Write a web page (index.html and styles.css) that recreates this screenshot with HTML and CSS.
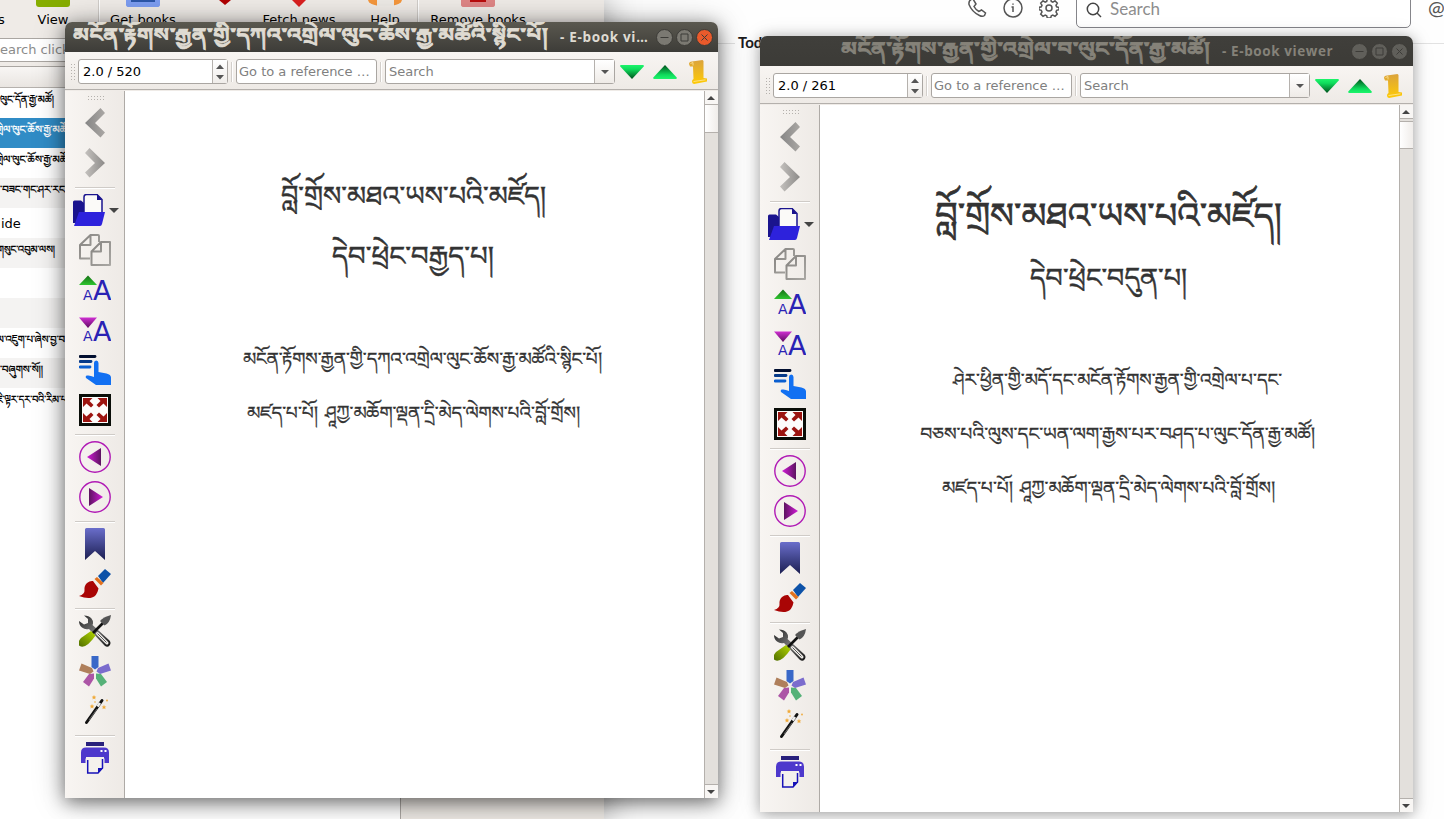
FILE: index.html
```
<!DOCTYPE html>
<html lang="en">
<head>
<meta charset="utf-8">
<title>E-book viewer</title>
<link rel="stylesheet" href="styles.css">
</head>
<body>
<svg class="defs" aria-hidden="true">
  <defs>
    <linearGradient id="gDown" x1="0" y1="0" x2="0" y2="1"><stop offset="0" stop-color="#1cf56b"/><stop offset=".3" stop-color="#0fdc5c"/><stop offset="1" stop-color="#00501c"/></linearGradient>
    <linearGradient id="gUp" x1="0" y1="1" x2="0" y2="0"><stop offset="0" stop-color="#1cf56b"/><stop offset=".3" stop-color="#0fdc5c"/><stop offset="1" stop-color="#00501c"/></linearGradient>
    <linearGradient id="gScroll" x1="0" y1="0" x2="0" y2="1"><stop offset="0" stop-color="#dba33c"/><stop offset="1" stop-color="#ffcb05"/></linearGradient>
    <linearGradient id="gGrey" x1="0" y1="0" x2="1" y2="1"><stop offset="0" stop-color="#858380"/><stop offset="1" stop-color="#a9a7a3"/></linearGradient>
    <linearGradient id="gGrey2" x1="0" y1="0" x2="1" y2="0"><stop offset="0" stop-color="#c4c1be"/><stop offset="1" stop-color="#8c8a88"/></linearGradient>
    <linearGradient id="gChev" x1="0" y1="0" x2="1" y2="0"><stop offset="0" stop-color="#858585"/><stop offset="1" stop-color="#aaa7a4"/></linearGradient>
    <linearGradient id="gGreen" x1="0" y1="0" x2="0" y2="1"><stop offset="0" stop-color="#156f15"/><stop offset="1" stop-color="#2fc52f"/></linearGradient>
    <linearGradient id="gPurple" x1="0" y1="0" x2="0" y2="1"><stop offset="0" stop-color="#cf2fd2"/><stop offset="1" stop-color="#5d0a60"/></linearGradient>
    <linearGradient id="gPl" x1="0" y1="0" x2="1" y2="0"><stop offset="0" stop-color="#d31bd8"/><stop offset="1" stop-color="#5c1460"/></linearGradient>
    <linearGradient id="gPr" x1="0" y1="0" x2="1" y2="0"><stop offset="0" stop-color="#5c1460"/><stop offset="1" stop-color="#d31bd8"/></linearGradient>
    <linearGradient id="gMark" x1="0" y1="0" x2="0" y2="1"><stop offset="0" stop-color="#6a6ecb"/><stop offset="1" stop-color="#1c1f52"/></linearGradient>
    <linearGradient id="gTool" x1="0" y1="0" x2="1" y2="1"><stop offset="0" stop-color="#222"/><stop offset=".5" stop-color="#777"/><stop offset="1" stop-color="#111"/></linearGradient>
    <linearGradient id="gHandle" x1="1" y1="0" x2="0" y2="1"><stop offset="0" stop-color="#b5d900"/><stop offset="1" stop-color="#4d6b00"/></linearGradient>

    <symbol id="i-back" viewBox="0 0 32 32"><path d="M21.500 1 26 6 16 16l10 9.500-4.500 5L6 16z" fill="url(#gChev)"/></symbol>
    <symbol id="i-fwd" viewBox="0 0 32 32"><path d="M10.500 1 6 6l10 10L6 25.500l4.500 5L26 16z" fill="url(#gGrey2)"/></symbol>
    <symbol id="i-open" viewBox="0 0 32 32"><path d="M0 8q0-1.500 1.500-1.500H8L11 9v9L3 29H0z" fill="#1a148e"/><path d="M11 20V3q0-2.500 2.500-2.500H24l5 5V20z" fill="#fbfaf8" stroke="#1a148e" stroke-width="1.500"/><path d="M24 0v6h5z" fill="#1a148e"/><path d="M6 18h26l-3 12q-.5 2-2 2H1z" fill="#2d22dc"/></symbol>
    <symbol id="i-copy" viewBox="0 0 32 32"><g fill="none" stroke="url(#gGrey)" stroke-width="2" stroke-linejoin="round"><path d="M11 24.500H1V11L11.500 1H19q1 0 1 1v6M11.500 1v10H1"/><path d="M12.500 17.500 22 8h9v23H12.500zM22 8v9.500h-9.500"/></g></symbol>
    <symbol id="i-larger" viewBox="0 0 32 32"><path d="M0 11 9 1.500l9 9.500z" fill="url(#gGreen)"/><text x="4" y="26" class="glyph-s">A</text><text x="14" y="26" class="glyph-l">A</text></symbol>
    <symbol id="i-smaller" viewBox="0 0 32 32"><path d="M0 3.500h18l-9 10.500z" fill="url(#gPurple)"/><text x="4" y="27" class="glyph-s">A</text><text x="14" y="27" class="glyph-l">A</text></symbol>
    <symbol id="i-touch" viewBox="0 0 32 32"><path d="M1 2.500h15" stroke="#020f30" stroke-width="2.800" stroke-linecap="round"/><path d="M1 7.500h11" stroke="#063a8a" stroke-width="2.800" stroke-linecap="round"/><path d="M1 13h10" stroke="#0b5fd0" stroke-width="2.800" stroke-linecap="round"/><path d="M15 21V9q0-2.500 2.200-2.500T19.500 9v9l8 1.500q4.500 1 4.500 4V31H17L7 24q-1-2 1-2.500 3-.5 7 1.500z" fill="#1270f2"/></symbol>
    <symbol id="i-full" viewBox="0 0 32 32"><path d="M1.500 1.500h29v29h-29z" fill="#fdfcfb" stroke="#0a0d08" stroke-width="3"/><g fill="#9c1410"><path d="M4 4h9.500l-3 3 4 4-2.500 2.500-4.500-4L4 13z"/><path d="M28 4h-9.500l3 3-4 4 2.500 2.500 4.500-4L28 13z"/><path d="M4 28h9.500l-3-3 4-4-2.500-2.500-4.500 4L4 19z"/><path d="M28 28h-9.500l3-3-4-4 2.500-2.500 4.500 4L28 19z"/></g></symbol>
    <symbol id="i-prev" viewBox="0 0 32 32"><circle cx="16" cy="16" r="15.200" fill="none" stroke="#b01ab5" stroke-width="1.400"/><path d="M8 16 22 7v18z" fill="url(#gPl)"/></symbol>
    <symbol id="i-next" viewBox="0 0 32 32"><circle cx="16" cy="16" r="15.200" fill="none" stroke="#b01ab5" stroke-width="1.400"/><path d="M24 16 10 7v18z" fill="url(#gPr)"/></symbol>
    <symbol id="i-mark" viewBox="0 0 32 32"><path d="M6 1.500Q6 0 7.500 0h17Q26 0 26 1.500V32l-10-9-10 9z" fill="url(#gMark)"/></symbol>
    <symbol id="i-brush" viewBox="0 0 32 32"><path d="m19 8 7-7 6 5-8 9z" fill="#0d52a8"/><path d="m15.500 11 2.500-2 6.500 6-2.500 2.500z" fill="#e2711d"/><path d="M14 13q-3-.5-6 2-3 3-2.500 7T0 28q8 3 13 1.500t6.500-9z" fill="#a90505"/></symbol>
    <symbol id="i-tools" viewBox="0 0 32 32"><path d="M5 .5q5 0 7.500 3Q15 7 13.500 10l17 15.500q2 2.500 0 5t-5 0L10 14q-4 1-7-1.500T0 6l5 3.500 4-1.500V4z" fill="url(#gTool)"/><path d="m18.500 18.500 9.500 9.500" stroke="#f1eeea" stroke-width="3" stroke-linecap="round"/><path d="m18.500 18.500 9 9" stroke="#555" stroke-width="1"/><path d="m12 20 13-13" stroke="#111" stroke-width="2.600"/><path d="M32 0q-8 2-11 6l4.500 4.500Q31 8 32 0z" fill="#555"/><path d="m12 16 4.500 4.500Q8 33 2 31.500T2 23z" fill="url(#gHandle)"/></symbol>
    <symbol id="i-tags" viewBox="0 0 32 32"><path d="M12.500 1h7v11L16 14.500 12.500 12z" fill="#3968c8"/><path d="m19 13 10.500-4.500L32 15.500l-11 3.500-3.500-2.500z" fill="#7b6ccd"/><path d="m17 18.500 5 .5 6 8-6 4.500-5-8z" fill="#55b178"/><path d="m15 18.500-5 .5-6 8 6 4.500 5-8z" fill="#ac55a6"/><path d="M13 13 2.500 8.500 0 15.500 11 19l3.500-2.500z" fill="#af7f5b"/></symbol>
    <symbol id="i-wand" viewBox="0 0 32 32"><path d="m7.500 27.500 15.500-22" stroke="#111" stroke-width="3" stroke-linecap="round"/><path d="m18.500 11.500 2.500-3.500" stroke="#eee" stroke-width="2.600"/><path d="m10 25 8-11" stroke="#888" stroke-width=".7"/><g fill="#f0aa3a"><path id="star" d="m15 0 .7 1.600 1.600.1-1.200 1.100.4 1.600L15 3.500l-1.500.9.4-1.600-1.200-1.100 1.600-.1z"/><path d="m13 9 .7 1.600 1.600.1-1.200 1.100.4 1.600-1.500-.9-1.500.9.4-1.600-1.200-1.100 1.600-.1z"/><path d="m25 9.800.7 1.600 1.600.1-1.200 1.100.4 1.600-1.500-.9-1.500.9.4-1.600-1.200-1.100 1.600-.1z"/><circle cx="28" cy="5.500" r=".9"/><circle cx="16" cy="7" r=".8"/></g></symbol>
    <symbol id="i-print" viewBox="0 0 32 32"><path d="M7 0h18v4H7z" fill="#28207c"/><path d="M7 5.500h18q5 0 5 5V21h-5v-7H7v7H2V10.500q0-5 5-5z" fill="#4d38cc"/><path d="M7 11h18v4H7z" fill="#4d38cc"/><path d="M21.500 8h2v2h-2zM25.500 8h2v2h-2z" fill="#fff"/><path d="M6.500 16.500h19V23H24v8H8v-8H6.500z" fill="#f4f1ed"/><path d="M8.700 18v13H19l4.500-5V17" fill="none" stroke="#1712b8" stroke-width="1.500"/><path d="M19 31v-5h5z" fill="#1712b8"/></symbol>
    <symbol id="i-down" viewBox="0 0 24 14"><path d="M1 0h22q1.500.5.5 1.800L12 14 .5 1.800Q-.5.500 1 0z" fill="url(#gDown)"/></symbol>
    <symbol id="i-up" viewBox="0 0 24 14"><path d="M1 14h22q1.500-.5.5-1.800L12 0 .5 12.200q-1 1.300.5 1.800z" fill="url(#gUp)"/></symbol>
    <symbol id="i-scroll" viewBox="0 0 18 24"><path d="M0 4Q0 1.800 3 1.500L13.500 0q1.500.5 1 3L14.500 18l3.500.5v3L5 24q-2-.5-2-2.500T4.500 19L4 6.500 1 6.500z" fill="url(#gScroll)"/><path d="M1.500 3.500 4 2.500v3M4.500 21.500l12-1.700" fill="none" stroke="#ffe9a0" stroke-width=".8"/></symbol>
    <symbol id="i-spin" viewBox="0 0 8 18"><path d="M0 6 4 1.500 8 6zM0 12h8l-4 4.500z" fill="#555"/></symbol>
  </defs>
</svg>

<div class="desktop">
  <section class="library">
    <div class="lib-toolbar">
      <div class="lib-item item-view"><i class="pic pic-view"></i><span>View</span></div>
      <b class="lib-sep"></b>
      <div class="lib-item item-get"><i class="pic pic-get"></i><span>Get books</span></div>
      <div class="lib-item item-heart"><i class="pic pic-heart"></i></div>
      <div class="lib-item item-news"><i class="pic pic-news"></i><span>Fetch news</span></div>
      <div class="lib-item item-help"><i class="pic pic-help"></i><span>Help</span></div>
      <b class="lib-sep"></b>
      <div class="lib-item item-remove"><i class="pic pic-remove"></i><span>Remove books</span></div>
      <span class="lib-cut">s</span>
    </div>
    <div class="lib-search">earch click</div>
    <div class="lib-main">
      <div class="lib-list">
        <div class="lib-head"></div>
        <div class="row"><svg class="bo"><text x="0" y="15" textLength="54" lengthAdjust="spacingAndGlyphs">ལུང་དོན་རྒྱ་མཚོ།</text></svg></div>
        <div class="row selected"><svg class="bo"><text x="-4" y="15" textLength="71" lengthAdjust="spacingAndGlyphs">གྲེལ་ལུང་ཆོས་རྒྱ་མཚོ</text></svg></div>
        <div class="row"><svg class="bo"><text x="-4" y="15" textLength="71" lengthAdjust="spacingAndGlyphs">གྲེལ་ལུང་ཆོས་རྒྱ་མཚོ</text></svg></div>
        <div class="row"><svg class="bo"><text x="0" y="15" textLength="67" lengthAdjust="spacingAndGlyphs">་བཟང་གང་ཤར་རང་</text></svg></div>
        <div class="row">ide</div>
        <div class="row"><svg class="bo"><text x="-3" y="15" textLength="58" lengthAdjust="spacingAndGlyphs">གསུང་འབུམ་ལས།</text></svg></div>
        <div class="row"></div>
        <div class="row"></div>
        <div class="row"><svg class="bo"><text x="-3" y="15" textLength="68" lengthAdjust="spacingAndGlyphs">ལ་འཇུག་པ་ཞེས་བྱ་བ</text></svg></div>
        <div class="row"><svg class="bo"><text x="0" y="15" textLength="43" lengthAdjust="spacingAndGlyphs">་བཞུགས་སོ།།</text></svg></div>
        <div class="row"><svg class="bo"><text x="-3" y="15" textLength="70" lengthAdjust="spacingAndGlyphs">ཇི་ལྟར་དར་བའི་རིམ་པ</text></svg></div>
      </div>
      <div class="lib-side"></div>
    </div>
  </section>

  <section class="chat">
    <header class="chat-head">
      <svg class="ci" viewBox="0 0 20 20"><path d="M4 1.500 6 1l3 5-2 2.500q1.500 3 5 5L14.500 12l4 3-1 2.500q-2 1.500-5 0Q5 14 2 6.500 1.500 3 4 1.500z"/></svg>
      <svg class="ci" viewBox="0 0 20 20"><circle cx="10" cy="10" r="9"/><path d="M8.500 9H10v5M10 5.500v1.300"/></svg>
      <svg class="ci" viewBox="0 0 20 20"><circle cx="10" cy="10" r="3"/><path d="M8.300 1h3.400l.6 2.400 1.500.7 2.200-1.300 2.300 2.300-1.300 2.200.6 1.500 2.400.6v2.200l-2.400.8-.6 1.500 1.300 2.200-2.300 2.200-2.200-1.200-1.500.6-.6 2.300H8.300l-.6-2.300-1.500-.6L4 18.300l-2.300-2.200L3 13.900l-.7-1.500L0 11.600V9.400l2.300-.6L3 7.300 1.700 5.100 4 2.800l2.200 1.300 1.500-.7z"/></svg>
      <div class="chat-search"><svg class="mag" viewBox="0 0 16 16"><circle cx="7" cy="7" r="5.700"/><path d="m11 11 4 4"/></svg><span>Search</span></div>
      <span class="at">@</span>
    </header>
    <div class="today">Today</div>
  </section>

  <section class="window win-a">
    <header class="titlebar">
      <svg class="bo title-bo"><text x="0" y="19" textLength="475" lengthAdjust="spacingAndGlyphs">མངོན་རྟོགས་རྒྱན་གྱི་དཀའ་འགྲེལ་ལུང་ཆོས་རྒྱ་མཚོའི་སྙིང་པོ།</text></svg>
      <span class="title-en">- E-book vi…</span>
      <svg class="wb" viewBox="0 0 17 17"><circle cx="8.500" cy="8.500" r="8"/><path d="M4.500 8.500h8"/></svg>
      <svg class="wb" viewBox="0 0 17 17"><circle cx="8.500" cy="8.500" r="8"/><path d="M5 5h7v7H5z"/></svg>
      <svg class="wb close" viewBox="0 0 17 17"><circle cx="8.500" cy="8.500" r="8"/><path d="m5.500 5.500 6 6m0-6-6 6"/></svg>
    </header>
    <div class="toolbar">
      <i class="grip-v"></i>
      <div class="spin"><span>2.0 / 520</span><b><svg><use href="#i-spin"/></svg></b></div>
      <i class="tsep"></i><div class="field goto">Go to a reference …</div>
      <i class="tsep"></i><div class="field find"><span>Search</span><b></b></div>
      <svg class="tri"><use href="#i-down"/></svg><svg class="tri"><use href="#i-up"/></svg><svg class="scroll"><use href="#i-scroll"/></svg>
    </div>
    <div class="body">
      <nav class="side">
        <i class="grip-h"></i>
        <svg><use href="#i-back"/></svg><svg><use href="#i-fwd"/></svg><hr>
        <div class="open"><svg><use href="#i-open"/></svg><i></i></div><svg><use href="#i-copy"/></svg><svg><use href="#i-larger"/></svg><svg><use href="#i-smaller"/></svg><svg><use href="#i-touch"/></svg><svg><use href="#i-full"/></svg><hr>
        <svg><use href="#i-prev"/></svg><svg><use href="#i-next"/></svg><hr>
        <svg><use href="#i-mark"/></svg><svg><use href="#i-brush"/></svg><hr>
        <svg><use href="#i-tools"/></svg><svg><use href="#i-tags"/></svg><svg><use href="#i-wand"/></svg><hr>
        <svg><use href="#i-print"/></svg>
      </nav>
      <main class="page page-a">
        <svg class="bo h1"><text x="156" y="30" textLength="265" lengthAdjust="spacingAndGlyphs">བློ་གྲོས་མཐའ་ཡས་པའི་མཛོད།</text></svg>
        <svg class="bo h1"><text x="207" y="30" textLength="162" lengthAdjust="spacingAndGlyphs">དེབ་ཕྲེང་བརྒྱད་པ།</text></svg>
        <svg class="bo p first"><text x="118" y="26" textLength="359" lengthAdjust="spacingAndGlyphs">མངོན་རྟོགས་རྒྱན་གྱི་དཀའ་འགྲེལ་ལུང་ཆོས་རྒྱ་མཚོའི་སྙིང་པོ།</text></svg>
        <svg class="bo p"><text x="122" y="26" textLength="71" lengthAdjust="spacingAndGlyphs">མཛད་པ་པོ།</text><text x="200" y="26" textLength="255" lengthAdjust="spacingAndGlyphs">ཤཱཀྱ་མཆོག་ལྡན་དྲི་མེད་ལེགས་པའི་བློ་གྲོས།</text></svg>
      </main>
      <div class="sb"><b class="up"></b><i></i><b class="down"></b></div>
    </div>
  </section>

  <section class="window win-b">
    <header class="titlebar">
      <svg class="bo title-bo"><text x="0" y="19" textLength="369" lengthAdjust="spacingAndGlyphs">མངོན་རྟོགས་རྒྱན་གྱི་འགྲེལ་བ་ལུང་དོན་རྒྱ་མཚོ།</text></svg>
      <span class="title-en">- E-book viewer</span>
      <svg class="wb" viewBox="0 0 17 17"><circle cx="8.500" cy="8.500" r="8"/><path d="M4.500 8.500h8"/></svg>
      <svg class="wb" viewBox="0 0 17 17"><circle cx="8.500" cy="8.500" r="8"/><path d="M5 5h7v7H5z"/></svg>
      <svg class="wb" viewBox="0 0 17 17"><circle cx="8.500" cy="8.500" r="8"/><path d="m5.500 5.500 6 6m0-6-6 6"/></svg>
    </header>
    <div class="toolbar">
      <i class="grip-v"></i>
      <div class="spin"><span>2.0 / 261</span><b><svg><use href="#i-spin"/></svg></b></div>
      <i class="tsep"></i><div class="field goto">Go to a reference …</div>
      <i class="tsep"></i><div class="field find"><span>Search</span><b></b></div>
      <svg class="tri"><use href="#i-down"/></svg><svg class="tri"><use href="#i-up"/></svg><svg class="scroll"><use href="#i-scroll"/></svg>
    </div>
    <div class="body">
      <nav class="side">
        <i class="grip-h"></i>
        <svg><use href="#i-back"/></svg><svg><use href="#i-fwd"/></svg><hr>
        <div class="open"><svg><use href="#i-open"/></svg><i></i></div><svg><use href="#i-copy"/></svg><svg><use href="#i-larger"/></svg><svg><use href="#i-smaller"/></svg><svg><use href="#i-touch"/></svg><svg><use href="#i-full"/></svg><hr>
        <svg><use href="#i-prev"/></svg><svg><use href="#i-next"/></svg><hr>
        <svg><use href="#i-mark"/></svg><svg><use href="#i-brush"/></svg><hr>
        <svg><use href="#i-tools"/></svg><svg><use href="#i-tags"/></svg><svg><use href="#i-wand"/></svg><hr>
        <svg><use href="#i-print"/></svg>
      </nav>
      <main class="page page-b">
        <svg class="bo h1 big"><text x="115" y="33" textLength="347" lengthAdjust="spacingAndGlyphs">བློ་གྲོས་མཐའ་ཡས་པའི་མཛོད།</text></svg>
        <svg class="bo h1"><text x="210" y="30" textLength="157" lengthAdjust="spacingAndGlyphs">དེབ་ཕྲེང་བདུན་པ།</text></svg>
        <svg class="bo p first"><text x="133" y="25" textLength="329" lengthAdjust="spacingAndGlyphs">ཤེར་ཕྱིན་གྱི་མདོ་དང་མངོན་རྟོགས་རྒྱན་གྱི་འགྲེལ་པ་དང་</text></svg>
        <svg class="bo p"><text x="100" y="25" textLength="395" lengthAdjust="spacingAndGlyphs">བཅས་པའི་ལུས་དང་ཡན་ལག་རྒྱས་པར་བཤད་པ་ལུང་དོན་རྒྱ་མཚོ།</text></svg>
        <svg class="bo p"><text x="122" y="25" textLength="71" lengthAdjust="spacingAndGlyphs">མཛད་པ་པོ།</text><text x="200" y="25" textLength="255" lengthAdjust="spacingAndGlyphs">ཤཱཀྱ་མཆོག་ལྡན་དྲི་མེད་ལེགས་པའི་བློ་གྲོས།</text></svg>
      </main>
      <div class="sb"><b class="up"></b><i></i><b class="down"></b></div>
    </div>
  </section>
</div>
</body>
</html>
```
FILE: styles.css
```
* { box-sizing: border-box; }
body { margin: 0; font: 13px "DejaVu Sans", sans-serif; color: #000; overflow: hidden; }
.defs { position: absolute; width: 0; height: 0; }
.bo { display: block; overflow: visible; font-family: "Noto Serif Tibetan", "Noto Sans Tibetan", "Jomolhari", "DejaVu Sans", serif; fill: currentColor; stroke: currentColor; stroke-width: .3px; }

.desktop { position: relative; width: 1444px; height: 819px; display: flex; background: #fefefe; overflow: hidden; }

/* library window behind the viewers */
.library { width: 604px; flex: none; display: flex; flex-direction: column; background: #efebe7; box-shadow: 0 0 34px rgba(0,0,0,.4); z-index: 1; }
.lib-toolbar { position: relative; height: 38px; flex: none; display: flex; overflow: hidden; }
.lib-item { display: flex; flex-direction: column; align-items: center; height: 29px; white-space: nowrap; flex: none; }
.lib-item span { line-height: 16px; margin-top: 5px; }
.lib-cut { position: absolute; left: -2px; top: 12px; line-height: 16px; }
.item-view { width: 32px; margin-left: 37px; }
.item-get { width: 66px; margin-left: 10px; }
.item-heart { width: 30px; margin-left: 34px; }
.item-news { width: 74px; margin-left: 22px; }
.item-help { width: 30px; margin-left: 34px; }
.item-remove { width: 96px; margin-left: 11px; }
.lib-sep { width: 2px; flex: none; background: #fff; border-left: 1px solid #d0ccc8; height: 36px; margin-left: 29px; }
.item-help + .lib-sep { margin-left: 17px; }
.pic { width: 34px; height: 7px; flex: none; }
.pic-view { background: #86ad00; border-radius: 0 0 3px 3px; }
.pic-get { background: #2c56a8; border: 5px solid #7d9df0; border-top: 0; border-radius: 0 0 3px 3px; }
.pic-heart { width: 12px; height: 5px; background: #b00000; clip-path: polygon(0 0, 100% 0, 50% 100%); }
.pic-news { width: 14px; background: #d92020; clip-path: polygon(0 0, 100% 0, 50% 100%); }
.pic-help { background: linear-gradient(90deg, #f4963c 25%, #ece9e5 25%, #ece9e5 75%, #f4963c 75%); border-radius: 0 0 16px 16px; clip-path: ellipse(50% 90% at 50% 0); }
.pic-remove { background: #b80c0c; border: 5px solid #de8585; border-width: 0 9px 5px; border-radius: 0 0 3px 3px; }
.lib-search { height: 24px; margin: 0 200px 0 -3px; padding-left: 2px; background: #fff; border: 1px solid #aaa6a2; line-height: 21px; color: #8b8b8b; flex: none; }
.lib-main { flex: 1; display: flex; padding-top: 4px; }
.lib-list { width: 400px; background: #fff; border-top: 1px solid #aaa6a2; }
.lib-head { height: 21px; background: linear-gradient(#f8f6f4, #e9e5e1); border-bottom: 1px solid #b5b1ad; }
.row { height: 30px; line-height: 31px; padding-left: 1px; }
.row:nth-child(odd) { background: #f4f3f2; }
.row:nth-child(2), .row:nth-child(4) { background: #fff; }
.row.selected { background: #308cc6; color: #fff; }
.row .bo { width: 66px; height: 30px; font-size: 10.500px; margin-left: -1px; }
.lib-side { flex: 1; border-left: 1px solid #aaa6a2; background: #ece8e3; }

/* chat window on the right */
.chat { flex: 1; display: flex; flex-direction: column; }
.chat-head { height: 44px; flex: none; display: flex; padding-left: 363px; border-bottom: 1px solid #e2e2e2; }
.ci { width: 20px; height: 20px; margin-top: -2px; margin-right: 16px; fill: none; stroke: #555; stroke-width: 1.500; flex: none; }
.chat-search { width: 335px; height: 34px; margin: -6px 0 0 1px; border: 1px solid #85858a; border-radius: 5px; display: flex; padding: 5px 0 0 9px; font: 17px/17px "Lato", sans-serif; color: #8d8d8d; background: #fff; flex: none; }
.mag { width: 16px; height: 16px; margin: 2px 8px 0 0; fill: none; stroke: #444; stroke-width: 1.500; }
.at { font: 20px/20px "Lato", sans-serif; color: #555; margin: -3px 0 0 17px; width: 20px; flex: none; }
.today { font: bold 15px/18px "Lato", sans-serif; color: #1d1c1d; margin: -11px 0 0 131px; padding-left: 3px; background: #fefefe; width: 50px; }

/* viewer windows */
.window { position: absolute; width: 653px; height: 776px; display: flex; flex-direction: column; border-radius: 7px 7px 0 0; background: #efebe7; z-index: 2; }
.win-a { left: 65px; top: 22px; box-shadow: 0 4px 18px rgba(0,0,0,.5), 0 2px 34px rgba(0,0,0,.22); }
.win-b { left: 760px; top: 36px; box-shadow: 0 2px 14px rgba(0,0,0,.32), 0 2px 24px rgba(0,0,0,.1); }
.titlebar { height: 30px; flex: none; display: flex; align-items: center; background: linear-gradient(#5a584f, #3d3c38); border-radius: 7px 7px 0 0; color: #dfdbd2; padding-left: 8px; overflow: hidden; }
.win-b .titlebar { background: linear-gradient(#403f3b, #3c3b37); color: #858279; padding-left: 81px; }
.title-bo { width: 476px; height: 30px; font-size: 18.500px; font-weight: bold; flex: none; stroke-width: .7px; }
.win-b .title-bo { width: 369px; }
.title-en { flex: none; font: bold 13.500px/30px "Open Sans", "Noto Sans", sans-serif; letter-spacing: .68px; white-space: nowrap; margin-left: 11px; width: 96px; }
.win-b .title-en { width: 129px; margin-left: 12px; letter-spacing: .6px; }
.wb { width: 17px; height: 17px; margin-right: 3px; flex: none; fill: #7b7972; stroke: #3d3c38; }
.win-b .wb { fill: #605f5a; }
.wb.close { fill: #ea5a2b; }
.toolbar { height: 38px; flex: none; display: flex; align-items: center; padding: 2px 0 0 5px; background: linear-gradient(#f8f5f2, #eeeae6); border-bottom: 1px solid #b4b0ac; color: #000; }
.grip-v { width: 5px; height: 17px; margin-right: 3px; background: radial-gradient(circle, #b5b1ad .8px, transparent 1px) 0 0 / 3px 3px; }
.spin { width: 150px; height: 25px; display: flex; background: #fff; border: 1px solid #aaa6a2; border-radius: 3px; line-height: 23px; padding-left: 4px; }
.spin span { flex: 1; }
.spin b { width: 15px; border-left: 1px solid #b5b1ad; display: flex; align-items: center; justify-content: center; background: linear-gradient(#fff, #f0edea); }
.spin svg { width: 8px; height: 18px; }
.tsep { width: 2px; height: 20px; margin: 0 3px 0 3px; border-left: 1px solid #d3cfcb; background: #fff; }
.field { height: 25px; border: 1px solid #aaa6a2; border-radius: 3px; background: #fff; line-height: 23px; color: #808080; padding-left: 3px; }
.goto { width: 141px; white-space: nowrap; padding-left: 2px; }
.find { width: 230px; display: flex; }
.find span { flex: 1; }
.find b { width: 20px; border-left: 1px solid #b5b1ad; background: linear-gradient(#fff, #efebe7); display: flex; align-items: center; justify-content: center; }
.find b::after { content: ""; border: 4px solid transparent; border-top-color: #555; border-bottom: 0; }
.tri { width: 24px; height: 14px; margin-left: 5px; }
.tri + .tri { margin-left: 9px; }
.scroll { width: 18px; height: 24px; margin-left: 12px; }
.body { flex: 1; display: flex; padding-top: 1px; }
.side { width: 60px; display: flex; flex-direction: column; align-items: center; border-right: 1px solid #aeaaa6; background: linear-gradient(90deg, #f8f5f2, #eeeae6); }
.grip-h { width: 17px; height: 6px; margin: 4px 0 2px 2px; background: radial-gradient(circle, #b5b1ad .8px, transparent 1px) 0 0 / 3px 3px; flex: none; }
.side > svg, .open svg { width: 32px; height: 32px; margin: 4px 0 4px 1px; flex: none; }
.side hr { width: 40px; height: 2px; margin: 4px 0 1px 1px; border: 0; border-top: 1px solid #cfcbc7; background: #fff; flex: none; }
.open { display: flex; align-items: center; width: 48px; height: 40px; margin-left: 5px; flex: none; }
.open svg { margin: 4px 4px 4px 0; }
.open i { border: 5px solid transparent; border-top-color: #444; border-bottom: 0; }
.glyph-s { font: 14px "DejaVu Sans"; fill: #2a22b4; }
.glyph-l { font: 27px "DejaVu Sans"; fill: #2a22b4; }
.page { flex: 1; background: #fff; color: #333; padding-top: 84px; min-width: 0; }
.page-b { padding-top: 90px; }
.h1 { width: 579px; height: 60px; font-size: 26.500px; stroke-width: .5px; }
.big { font-size: 35.500px; height: 62px; stroke-width: .7px; }
.p { width: 579px; height: 54px; font-size: 18px; }
.first { margin-top: 44px; }
.sb { width: 14px; display: flex; flex-direction: column; border-left: 1px solid #b4b0ac; background: #e3e0dc; }
.sb b { height: 14px; background: #f8f6f4; display: flex; align-items: center; justify-content: center; border-bottom: 1px solid #b4b0ac; padding-right: 1px; }
.sb i { height: 28px; background: linear-gradient(90deg, #fff, #f0edea); border-bottom: 1px solid #b4b0ac; margin-bottom: auto; }
.win-b .sb i { margin-top: 2px; border-top: 1px solid #b4b0ac; }
.sb b::after { content: ""; border: 4px solid transparent; }
.sb .up::after { border-bottom-color: #444; border-top: 0; }
.sb .down { border-bottom: 0; border-top: 1px solid #b4b0ac; }
.sb .down::after { border-top-color: #444; border-bottom: 0; }
```
